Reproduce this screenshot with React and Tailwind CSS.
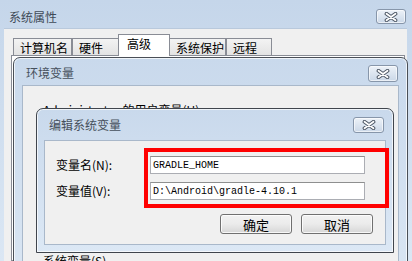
import React from 'react';

const CloseBtn = ({ className }) => (
  <div
    className={`flex shrink-0 items-center justify-center rounded-[3px] border border-[#8796aa] bg-gradient-to-b from-[#edf2f8] to-[#cbd8e8] shadow-[inset_0_0_0_1px_rgba(255,255,255,0.6)] ${className}`}
  >
    <svg width="14" height="10" viewBox="0 0 14 10">
      <path d="M2.5 1.8 L11.5 8.2 M11.5 1.8 L2.5 8.2" stroke="#4e5866" strokeWidth="3.8" strokeLinecap="round" />
      <path d="M2.5 1.8 L11.5 8.2 M11.5 1.8 L2.5 8.2" stroke="#ffffff" strokeWidth="1.8" strokeLinecap="round" />
    </svg>
  </div>
);

const tabs = [
  { label: '计算机名', w: 'w-[59px]' },
  { label: '硬件', w: 'w-[47px]' },
  { label: '高级', w: 'w-[52px]', active: true },
  { label: '系统保护', w: 'w-[57px]' },
  { label: '远程', w: 'w-[46px]' },
];

const Field = ({ label, value }) => (
  <div className="flex items-center h-[18px]">
    <div className="w-[105px] pl-[11px] text-[12px] leading-[14px] text-black">{label}</div>
    <div className="w-[215px] h-[18px] border border-[#abadb3] border-t-[#8e8f8f] bg-white flex items-center pl-[2px] font-['Liberation_Mono',monospace] text-[10px] text-black whitespace-pre">
      {value}
    </div>
  </div>
);

const Btn = ({ children }) => (
  <div className="w-[72px] h-[20px] rounded-[3px] border border-[#707070] bg-gradient-to-b from-[#f2f2f2] via-[#ebebeb] to-[#d6d6d6] shadow-[inset_0_0_0_1px_rgba(255,255,255,0.8)] flex items-center justify-center text-[13px] leading-none text-black">
    {children}
  </div>
);

export default function App() {
  return (
    <div className="relative w-[412px] h-[261px] overflow-hidden font-['Noto_Sans_CJK_SC',sans-serif]">
      {/* 系统属性 window */}
      <div className="absolute inset-0 flex flex-col bg-gradient-to-b from-[#c5d6ea] to-[#dbe7f4]">
        <div className="h-[28px] shrink-0 flex items-start justify-between pl-[9px] pr-[6px] pt-[9px]">
          <div className="text-[12px] leading-[16px] text-[#3f4a57]">系统属性</div>
          <CloseBtn className="w-[30px] h-[15px]" />
        </div>
        <div className="flex-1 ml-[4px] mr-[5px] flex flex-col bg-[#f0f0f0] border-t border-[#b9c9dc] pt-[5px] pl-[7px] pr-[2px]">
          <div className="flex items-end h-[22px] pl-[2px] -mb-[1px] relative z-10">
            {tabs.map((t) =>
              t.active ? (
                <div
                  key={t.label}
                  className={`${t.w} h-[22px] -mx-[1px] relative z-10 border border-b-0 border-[#898c95] bg-white pl-[8px] pt-[2px] text-[12px] leading-[14px] text-black`}
                >
                  {t.label}
                </div>
              ) : (
                <div
                  key={t.label}
                  className={`${t.w} h-[18px] border border-[#898c95] bg-gradient-to-b from-[#f3f3f3] to-[#e3e3e3] pl-[6px] pt-[2px] text-[12px] leading-[14px] text-black`}
                >
                  {t.label}
                </div>
              )
            )}
          </div>
          <div className="flex-1 border border-[#898c95] bg-white" />
        </div>
      </div>

      {/* 环境变量 window */}
      <div className="absolute left-[13px] top-[57px] w-[395px] h-[230px] flex flex-col rounded-t-[7px] border border-[#4a4f57] bg-gradient-to-b from-[#c9d9ec] to-[#dae6f3] shadow-[inset_0_0_0_1px_rgba(255,255,255,0.7)]">
        <div className="h-[27px] shrink-0 flex items-start justify-between pl-[12px] pr-[9px] pt-[7px]">
          <div className="text-[12px] leading-[16px] text-[#46505c]">环境变量</div>
          <CloseBtn className="w-[30px] h-[17px]" />
        </div>
        <div className="flex-1 mx-[8px] flex flex-col bg-[#f0f0f0] border border-[#a9b8ca] pt-[17px] px-[20px]">
          <div className="text-[12px] leading-[14px] text-black whitespace-nowrap">Administrator 的用户变量(U)</div>
          <div className="h-[128px] mt-[4px] border border-[#828790] bg-white" />
          <div className="mt-[5px] text-[12px] leading-[14px] text-black whitespace-nowrap">系统变量(S)</div>
        </div>
      </div>

      {/* 编辑系统变量 window */}
      <div className="absolute left-[36px] top-[108px] w-[358px] h-[145px] flex flex-col rounded-t-[7px] border border-[#40454d] bg-gradient-to-b from-[#c9d9ec] to-[#dce8f5] shadow-[inset_0_0_0_1px_rgba(255,255,255,0.7)] px-[7px] pb-[7px]">
        <div className="h-[31px] shrink-0 flex items-center justify-between pl-[5px] pr-[2px]">
          <div className="text-[12px] leading-[16px] text-[#46505c]">编辑系统变量</div>
          <CloseBtn className="w-[31px] h-[16px]" />
        </div>
        <div className="flex-1 bg-[#f0f0f0] border border-[#a9b8ca] flex flex-col pt-[15px]">
          <div className="flex flex-col gap-[8px]">
            <Field label="变量名(N):" value="GRADLE_HOME" />
            <Field label="变量值(V):" value="D:\Android\gradle-4.10.1" />
          </div>
          <div className="flex justify-end gap-[9px] pr-[12px] mt-[14px]">
            <Btn>确定</Btn>
            <Btn>取消</Btn>
          </div>
        </div>
        {/* red highlight annotation */}
        <div className="absolute left-[107px] top-[39px] w-[245px] h-[60px] border-[4px] border-[#ff0000]" />
      </div>
    </div>
  );
}
